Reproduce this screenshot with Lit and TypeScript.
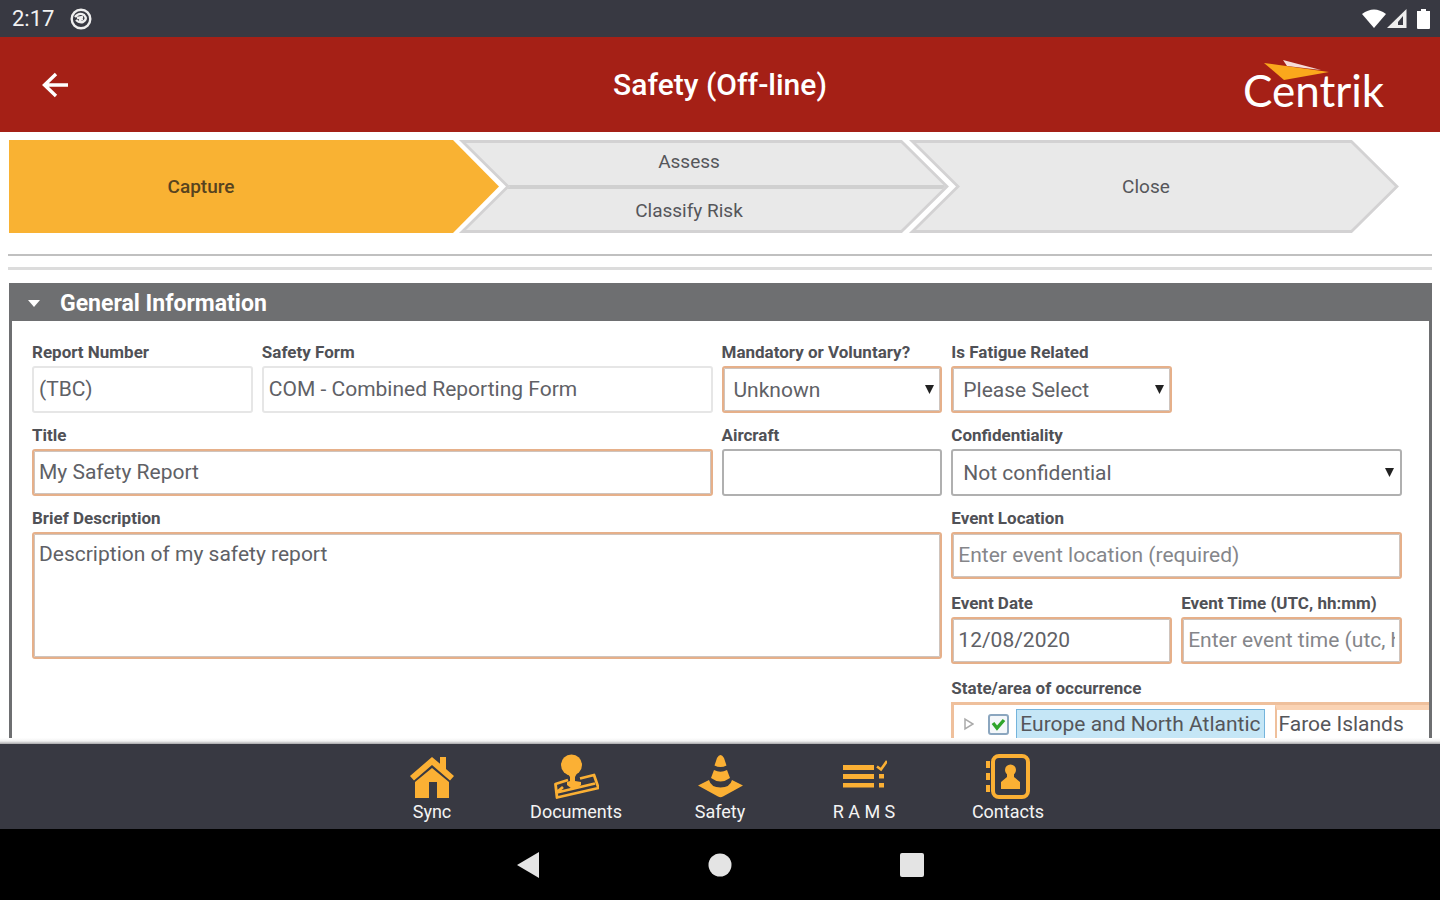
import { LitElement, html, css, svg } from "lit";
import { customElement } from "lit/decorators.js";

const icons = {
  sync: svg`<path d="M1 23 23 4l8 6.800V4h6v12l8 7-4 4.500L23 12 5 27.500z"/><path d="M23 15 40 29v16H28V29h-8v16H6V29z"/>`,
  documents: svg`<circle cx="18.500" cy="12" r="10.500"/><path d="M13 18h12l-3 6v4l6 1v3l-6 4h-3l-5-4v-3l3-1v-4z"/><path d="m15 27-12.500 4 1.500 13.500L45.500 35 41 22l-14 3.500M4 39l6-5M4 39.500l38-9" fill="none" stroke="currentColor" stroke-width="2.800" stroke-linejoin="round"/>`,
  safety: svg`<path d="M17.500 12.500 20 5q3.500-6 7 0l2.500 7.500q-6 3-12 0zM14 25l3-8q6.500 3.500 13 0l3 8q-9.500 7-19 0z"/><path d="m12 27-11 5.500 20 11q2.500 1.500 5 0l20-11L35 27q-2 7.500-11.500 7.500T12 27z"/>`,
  rams: svg`<path d="M2 12h31v5H2zM2 21h31v5H2zM2 30h31v4.500H2zM38 21h5v4.500h-5zM38 30h5v4.500h-5z"/><path d="m36 13.500 4 3 6-8.500" fill="none" stroke="currentColor" stroke-width="2.600"/>`,
  contacts: svg`<rect x="8" y="3" width="35" height="41" rx="6" fill="none" stroke="currentColor" stroke-width="4"/><path d="M1 8h4v7H1zM1 20h4v7H1zM1 32h4v7H1z"/><circle cx="25.500" cy="17" r="5.500"/><path d="M22 20h7v4l6 5v7H16v-7l6-5z"/>`,
};

const navItems: [keyof typeof icons, string][] = [
  ["sync", "Sync"],
  ["documents", "Documents"],
  ["safety", "Safety"],
  ["rams", "R A M S"],
  ["contacts", "Contacts"],
];

@customElement("app-root")
export class AppRoot extends LitElement {
  static styles = css`
    :host {
      display: flex;
      flex-direction: column;
      height: 100vh;
      background: #fff;
      font-family: Roboto, "Liberation Sans", sans-serif;
      color: #55565a;
    }
    * { box-sizing: border-box; }
    svg { display: block; }
    button { border: 0; padding: 0; background: none; font: inherit; color: inherit; }

    .status {
      display: flex;
      align-items: center;
      justify-content: space-between;
      height: 37px;
      padding: 0 10px 0 12px;
      background: #383942;
      color: #f2f2f2;
      font-size: 22px;
    }
    .status-group { display: flex; align-items: center; gap: 16px; }
    .status-icons { display: flex; align-items: center; gap: 1px; }

    .bar {
      display: grid;
      grid-template-columns: 1fr auto 1fr;
      align-items: center;
      height: 95px;
      padding: 0 40px;
      background: #a52016;
      color: #fff;
    }
    .title { margin: 0; font-size: 30px; font-weight: 500; line-height: 36px; }
    .back { justify-self: start; }
    .logo { justify-self: end; margin-right: 14px; }
    .logo-text { font-family: Lato, sans-serif; font-size: 44px; font-weight: 400; }

    .content {
      flex: 1;
      min-height: 0;
      overflow: hidden;
      padding: 8px 8px 0;
    }

    .steps {
      display: flex;
      height: 93px;
      margin: 0 33px 0 1px;
      padding: 0;
      list-style: none;
      font-size: 19px;
      line-height: 24px;
    }
    .step { flex: none; width: calc((100% + 80px) / 3); display: grid; text-align: center; }
    .step + .step {
      margin-left: -40px;
      padding: 3px 0;
      background: #d3d2d3;
      clip-path: polygon(0 0, calc(100% - 47px) 0, 100% 50%, calc(100% - 47px) 100%, 0 100%, 47px 50%);
    }
    .step.current {
      align-items: center;
      padding-right: 106px;
      background: #f9b233;
      color: #57431f;
      font-weight: 500;
      clip-path: polygon(0 0, calc(100% - 46px) 0, 100% 50%, calc(100% - 46px) 100%, 0 100%);
    }
    .step-face {
      display: grid;
      row-gap: 10px;
      background: linear-gradient(#d0d0d0, #d0d0d0) center / 100% 4px no-repeat #e9e9e9;
      clip-path: polygon(7px 0, calc(100% - 48px) 0, calc(100% - 4px) 50%, calc(100% - 48px) 100%, 7px 100%, 51px 50%);
      align-items: center;
      padding-right: 30px;
    }
    .step-face.single { background: #e9e9e9; padding-right: 16px; }

    .rules { height: 16px; margin: 21px 0 13px; border-top: 2px solid #c0c0c0; border-bottom: 3px solid #dcdcdc; }

    .panel { margin: 0 0 0 1px; border: 3px solid #6e6f71; border-top: 0; height: 600px; overflow: hidden; }
    .panel-head {
      display: flex;
      align-items: center;
      gap: 20px;
      width: 100%;
      height: 38px;
      padding: 2px 16px 0;
      background: #6e6f71;
      color: #fff;
      font-size: 23px;
      font-weight: 700;
    }
    .form {
      display: grid;
      grid-template-columns: repeat(6, minmax(0, 1fr));
      gap: 13px 9px;
      padding: 22px 27px 0 20px;
    }
    .field { display: flex; flex-direction: column; gap: 5px; min-width: 0; }
    .span2 { grid-column: span 2; }
    .span3 { grid-column: span 3; }
    .span4 { grid-column: span 4; }
    .side { display: grid; grid-template-columns: repeat(2, minmax(0, 1fr)); gap: 15px 9px; }
    .label { font-size: 17px; line-height: 18px; font-weight: 700; color: #505156; white-space: nowrap; }
    .box {
      width: 100%;
      height: 47px;
      margin: 0;
      padding: 0 5px 2px;
      border: 2px solid #b0b0b0;
      border-radius: 3px;
      background: #fff;
      color: #606166;
      font-family: inherit;
      font-size: 21px;
      line-height: 26px;
      outline: 0;
      appearance: none;
    }
    .box::placeholder { color: #85868a; opacity: 1; }
    .box[readonly] { border-color: #e6e6e6; }
    .box.required { border-color: #e6b08a; box-shadow: inset 0 0 0 1px #cfc4bd; }
    .area { height: 127px; padding: 7px 5px; resize: none; display: block; }
    .pick { display: grid; align-items: center; }
    .pick > * { grid-area: 1 / 1; }
    .pick .box { padding: 0 10px; }
    .pick svg { justify-self: end; margin-right: 8px; pointer-events: none; }

    .tree {
      display: flex;
      align-items: flex-start;
      height: 120px;
      margin-right: -27px;
      border: 3px solid #efc09c;
      border-right: 0;
      font-size: 21px;
      line-height: 28px;
      white-space: nowrap;
    }
    .node { display: flex; align-items: center; padding: 4px 0 0 10px; }
    .node-label { margin-left: 7px; padding: 0 3px; background: #c5e6f6; border: 1px solid #74b4dc; }
    .tick { display: grid; place-items: center; margin-left: 14px; }
    .tick > * { grid-area: 1 / 1; }
    .tick svg { pointer-events: none; }
    .tick-box { width: 21px; height: 21px; margin: 0; border: 2px solid #8ba6bf; border-radius: 3px; background: #f4f7fa; appearance: none; }
    .area-list {
      flex: 1;
      height: 110px;
      margin-left: 10px;
      border-top: 5px solid #fad3b4;
      border-left: 2px solid #efc09c;
      padding-left: 2px;
    }

    .edge { height: 6px; background: linear-gradient(#fff, #f2f2f2 50%, #a8a8aa); }
    .tabs { display: flex; justify-content: center; height: 85px; background: #383942; }
    .tab {
      display: flex;
      flex-direction: column;
      align-items: center;
      width: 10%;
      padding-top: 9px;
      color: #f4f4f4;
      font-size: 18px;
      line-height: 22px;
      text-decoration: none;
    }
    .tab svg { color: #fbb034; fill: currentColor; margin-bottom: 2px; }
    .system { display: flex; justify-content: center; height: 71px; background: #000; }
    .key { display: grid; place-items: center; width: 192px; }
  `;

  private arrow() {
    return html`<svg width="9" height="9" viewBox="0 0 9 9" aria-hidden="true"><path d="M0 0h9L4.500 9z" fill="#222"/></svg>`;
  }

  private pick(id: string, label: string, value: string, span = "", required = true) {
    return html`<div class="field ${span}">
      <label class="label" for=${id}>${label}</label>
      <div class="pick">
        <select id=${id} class="box ${required ? "required" : ""}"><option>${value}</option></select>
        ${this.arrow()}
      </div>
    </div>`;
  }

  private text(id: string, label: string, o: { value?: string; hint?: string; span?: string; kind?: string; locked?: boolean } = {}) {
    return html`<div class="field ${o.span ?? ""}">
      <label class="label" for=${id}>${label}</label>
      <input id=${id} type="text" class="box ${o.kind ?? ""}" .value=${o.value ?? ""} placeholder=${o.hint ?? ""} ?readonly=${o.locked} />
    </div>`;
  }

  render() {
    return html`
      <div class="status">
        <div class="status-group">
          <span>2:17</span>
          <svg width="22" height="22" viewBox="0 0 22 22" fill="none" stroke="#eee" stroke-width="2.400" aria-hidden="true">
            <circle cx="11" cy="11" r="9.300"/><path d="M5 9q4-5 9-2 4 4-1 7-4 1-7-2M7 10l6-1M9 12l4-1"/>
          </svg>
        </div>
        <div class="status-icons">
          <svg width="24" height="20" viewBox="0 0 24 20" fill="#fff" aria-hidden="true"><path d="M0 5Q12-4 24 5L12 19z"/></svg>
          <svg width="29" height="20" viewBox="0 0 29 20" aria-hidden="true"><path d="M0 19 19.500 0v19z" fill="#eee"/><path d="M11 16V13l5-6v9z" fill="#383942"/></svg>
          <svg width="13" height="20" viewBox="0 0 13 20" fill="#fff" aria-hidden="true"><path d="M4 0h5v2h4v17q0 1-1 1H1q-1 0-1-1V2h4z"/></svg>
        </div>
      </div>

      <header class="bar">
        <button class="back" type="button" aria-label="Back">
          <svg width="30" height="30" viewBox="0 0 30 30" fill="none" stroke="#fff" stroke-width="3.400"><path d="M28 15H5M16 4 4.500 15 16 26"/></svg>
        </button>
        <h1 class="title">Safety (Off-line)</h1>
        <svg class="logo" width="144" height="60" viewBox="0 0 144 60" role="img" aria-label="Centrik">
          <text class="logo-text" x="1" y="52" fill="#fff">Centrik</text>
          <path d="m41 5 38 10-34-4z" fill="#f7dcd8"/><path d="m22 8 65 9-45 8z" fill="#fba81c"/>
        </svg>
      </header>

      <main class="content">
        <ol class="steps">
          <li class="step current" aria-current="step">Capture</li>
          <li class="step"><div class="step-face"><span>Assess</span><span>Classify Risk</span></div></li>
          <li class="step"><div class="step-face single"><span>Close</span></div></li>
        </ol>
        <div class="rules"></div>

        <section class="panel">
          <button class="panel-head" type="button" aria-expanded="true">
            <svg width="12" height="7" viewBox="0 0 12 7" fill="#fff" aria-hidden="true"><path d="M0 0h12L6 7z"/></svg>
            General Information
          </button>
          <form class="form">
            ${this.text("number", "Report Number", { value: "(TBC)", locked: true })}
            ${this.text("form", "Safety Form", { value: "COM - Combined Reporting Form", span: "span2", locked: true })}
            ${this.pick("mandatory", "Mandatory or Voluntary?", "Unknown")}
            ${this.pick("fatigue", "Is Fatigue Related", "Please Select")}
            <span></span>
            ${this.text("title", "Title", { value: "My Safety Report", span: "span3", kind: "required" })}
            ${this.text("aircraft", "Aircraft")}
            ${this.pick("confidentiality", "Confidentiality", "Not confidential", "span2", false)}
            <div class="field span4">
              <label class="label" for="brief">Brief Description</label>
              <textarea id="brief" class="box area required" .value=${"Description of my safety report"}></textarea>
            </div>
            <div class="side span2">
              ${this.text("location", "Event Location", { hint: "Enter event location (required)", span: "span2", kind: "required" })}
              ${this.text("date", "Event Date", { value: "12/08/2020", kind: "required" })}
              ${this.text("time", "Event Time (UTC, hh:mm)", { hint: "Enter event time (utc, hh:mm)", kind: "required" })}
              <div class="field span2">
                <span class="label" id="state">State/area of occurrence</span>
                <div class="tree" role="group" aria-labelledby="state">
                  <div class="node">
                    <svg width="10" height="14" viewBox="0 0 10 14" fill="none" stroke="#aaa" stroke-width="1.500" aria-hidden="true"><path d="M1 2v10l8-5z"/></svg>
                    <span class="tick">
                      <input id="europe" class="tick-box" type="checkbox" checked />
                      <svg width="15" height="13" viewBox="0 0 15 13" fill="none" stroke="#2fa52b" stroke-width="3.400" aria-hidden="true"><path d="m2 5 4 5 7-8"/></svg>
                    </span>
                    <label class="node-label" for="europe">Europe and North Atlantic</label>
                  </div>
                  <div class="area-list">Faroe Islands</div>
                </div>
              </div>
            </div>
          </form>
        </section>
      </main>

      <div class="edge"></div>
      <nav class="tabs">
        ${navItems.map(([icon, label]) => html`<a class="tab" href="#${icon}">
          <svg width="46" height="46" viewBox="0 0 46 46" aria-hidden="true">${icons[icon]}</svg>${label}
        </a>`)}
      </nav>
      <div class="system">
        <button class="key" type="button" aria-label="Back"><svg width="22" height="26" viewBox="0 0 22 26" fill="#e4e4e4"><path d="M22 0v26L0 13z"/></svg></button>
        <button class="key" type="button" aria-label="Home"><svg width="24" height="24" viewBox="0 0 24 24" fill="#e4e4e4"><circle cx="12" cy="12" r="11.500"/></svg></button>
        <button class="key" type="button" aria-label="Recent apps"><svg width="24" height="24" viewBox="0 0 24 24" fill="#e4e4e4"><rect width="24" height="24" rx="2"/></svg></button>
      </div>
    `;
  }
}
